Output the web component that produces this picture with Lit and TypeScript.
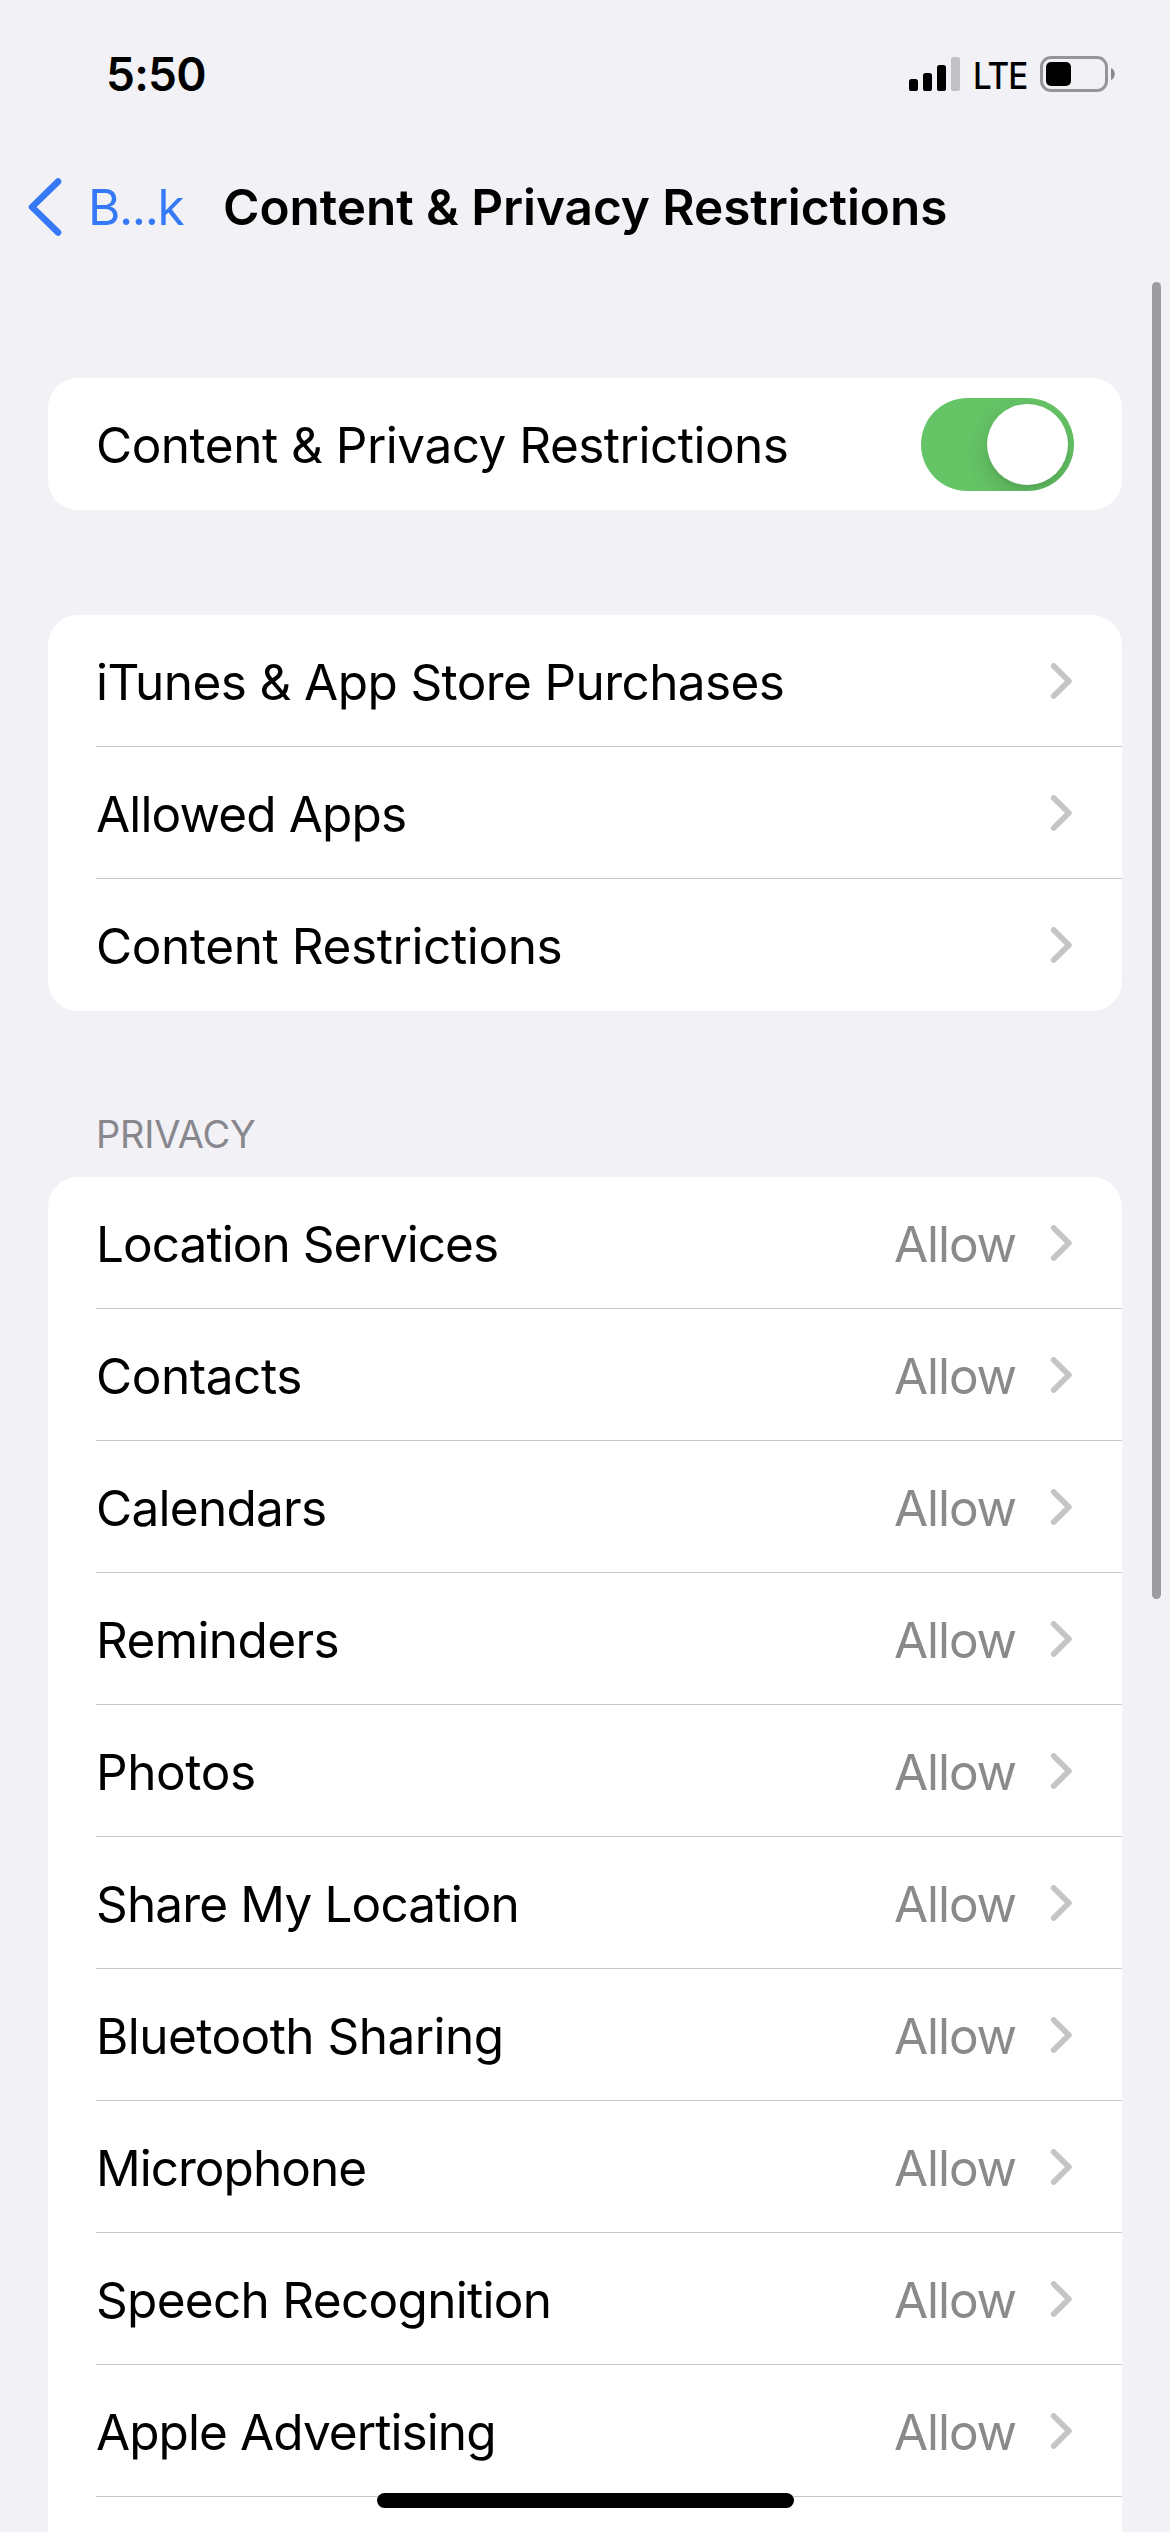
import { LitElement, html, css, svg, nothing } from "lit";
import { customElement, property } from "lit/decorators.js";
import { styleMap } from "lit/directives/style-map.js";

interface Item {
  label: string;
  /** Letter spacing of the label, in pixels. */
  tracking: number;
}

const MAIN_ITEMS: Item[] = [
  { label: "iTunes & App Store Purchases", tracking: -0.6 },
  { label: "Allowed Apps", tracking: -0.85 },
  { label: "Content Restrictions", tracking: -0.4 },
];

const PRIVACY_ITEMS: Item[] = [
  { label: "Location Services", tracking: -0.95 },
  { label: "Contacts", tracking: -0.45 },
  { label: "Calendars", tracking: -0.72 },
  { label: "Reminders", tracking: -0.62 },
  { label: "Photos", tracking: -0.4 },
  { label: "Share My Location", tracking: -0.85 },
  { label: "Bluetooth Sharing", tracking: -0.55 },
  { label: "Microphone", tracking: -0.98 },
  { label: "Speech Recognition", tracking: -0.7 },
  { label: "Apple Advertising", tracking: -0.92 },
];

const SIGNAL_BARS = [
  { x: 0, h: 12, on: true },
  { x: 14, h: 18, on: true },
  { x: 28, h: 26, on: true },
  { x: 42, h: 34, on: false },
];

@customElement("status-bar")
export class StatusBar extends LitElement {
  static styles = css`
    :host {
      display: flex;
      align-items: flex-start;
      justify-content: space-between;
      height: 141px;
      padding: 0 54px 0 106px;
      box-sizing: border-box;
    }
    .time {
      margin-top: 46px;
      font-size: 46px;
      line-height: 56px;
      font-weight: 600;
      letter-spacing: -0.8px;
    }
    .right {
      display: flex;
      align-items: flex-start;
      padding-top: 56px;
    }
    .signal {
      margin-top: 1px;
    }
    .net {
      width: 54px;
      margin: -2px 13px 0 13px;
      font-size: 36.5px;
      line-height: 44px;
      font-weight: 500;
      letter-spacing: -1.2px;
      white-space: nowrap;
      transform: scaleX(0.91);
      transform-origin: 0 0;
    }
  `;
  render() {
    return html`
      <div class="time">5:50</div>
      <div class="right">
        <svg class="signal" width="51" height="34" viewBox="0 0 51 34">
          ${SIGNAL_BARS.map(
            (b) => svg`<rect x=${b.x} y=${34 - b.h} width="9" height=${b.h} rx="2.6" fill=${b.on ? "#000" : "#c1c0c5"}></rect>`
          )}
        </svg>
        <div class="net">LTE</div>
        <svg width="76" height="36" viewBox="0 0 76 36">
          <rect x="1.5" y="1.5" width="65" height="33" rx="9.5" fill="none" stroke="#959598" stroke-width="3"></rect>
          <rect x="6" y="6" width="25" height="24" rx="5" fill="#000"></rect>
          <path d="M71 12 C76 14 76 22 71 24 Z" fill="#88888b"></path>
        </svg>
      </div>
    `;
  }
}

@customElement("nav-bar")
export class NavBar extends LitElement {
  static styles = css`
    :host {
      display: flex;
      align-items: center;
      height: 132px;
      padding-left: 28px;
      box-sizing: border-box;
    }
    .back {
      display: flex;
      align-items: center;
      width: 195px;
      color: #3579f6;
      font-size: 49.5px;
      line-height: 60px;
    }
    .back span {
      margin-left: 26px;
      letter-spacing: -1.4px;
    }
    .title {
      font-size: 49.5px;
      line-height: 60px;
      font-weight: 600;
      letter-spacing: -0.05px;
      white-space: nowrap;
    }
  `;
  render() {
    return html`
      <div class="back">
        <svg width="34" height="58" viewBox="0 0 34 58">
          <path d="M30 3.6 L4 29 L30 54.4" fill="none" stroke="#3579f6" stroke-width="6.6" stroke-linecap="round" stroke-linejoin="round"></path>
        </svg>
        <span>B...k</span>
      </div>
      <div class="title">Content &amp; Privacy Restrictions</div>
    `;
  }
}

@customElement("toggle-switch")
export class ToggleSwitch extends LitElement {
  static styles = css`
    :host {
      display: flex;
      justify-content: flex-end;
      width: 153px;
      height: 93px;
      padding: 6px;
      box-sizing: border-box;
      border-radius: 47px;
      background: #65c466;
      overflow: hidden;
    }
    .knob {
      width: 81px;
      height: 81px;
      border-radius: 50%;
      background: #fff;
      box-shadow: 0 9px 24px rgba(0, 0, 0, 0.16), 0 3px 3px rgba(0, 0, 0, 0.05);
    }
  `;
  render() {
    return html`<div class="knob"></div>`;
  }
}

@customElement("settings-row")
export class SettingsRow extends LitElement {
  @property() label = "";
  @property() value?: string;
  @property({ type: Number }) tracking = -0.6;
  @property({ type: Boolean }) toggle = false;

  static styles = css`
    :host {
      display: block;
      padding-left: 48px;
    }
    .row {
      display: flex;
      align-items: center;
      height: 132px;
      padding: 1px 48px 0 0;
      box-sizing: border-box;
      border-bottom: 1px solid #c6c6c8;
      font-size: 49.5px;
      line-height: 60px;
    }
    :host([last]) .row {
      border-bottom-color: transparent;
    }
    .label {
      flex: 1;
      margin-top: 2px;
      color: #000;
      white-space: nowrap;
    }
    .value {
      margin: 2px 34px 0 0;
      color: #8a8a8d;
      letter-spacing: -1.1px;
    }
  `;
  render() {
    return html`
      <div class="row">
        <span class="label" style=${styleMap({ letterSpacing: `${this.tracking}px` })}>${this.label}</span>
        ${this.value ? html`<span class="value">${this.value}</span>` : nothing}
        ${this.toggle
          ? html`<toggle-switch></toggle-switch>`
          : html`<svg width="24" height="36" viewBox="0 0 24 36">
              <path d="M3.7 3 L18.9 18 L3.7 33" fill="none" stroke="#c5c5c7" stroke-width="5.8" stroke-linecap="round" stroke-linejoin="round"></path>
            </svg>`}
      </div>
    `;
  }
}

@customElement("app-root")
export class AppRoot extends LitElement {
  static styles = css`
    :host {
      display: block;
      position: relative;
      width: 1170px;
      height: 2532px;
      overflow: hidden;
      background: #f2f1f6;
      color: #000;
      font-family: Inter, "Liberation Sans", sans-serif;
    }
    .content {
      display: flex;
      flex-direction: column;
      padding: 105px 48px 0;
    }
    .card {
      flex: none;
      border-radius: 30px;
      background: #fff;
      overflow: hidden;
    }
    .card.gap {
      margin-top: 105px;
    }
    .card.open {
      height: 1400px;
      border-radius: 30px 30px 0 0;
    }
    .heading {
      height: 46px;
      margin: 100px 0 20px 48px;
      font-size: 38px;
      line-height: 46px;
      letter-spacing: -0.2px;
      color: #88878d;
    }
    .scrollbar {
      position: absolute;
      top: 282px;
      right: 9px;
      width: 9px;
      height: 1317px;
      border-radius: 5px;
      background: #9d9d9f;
    }
    .home {
      position: absolute;
      left: 377px;
      bottom: 24px;
      width: 417px;
      height: 15px;
      border-radius: 8px;
      background: #000;
    }
  `;
  render() {
    return html`
      <status-bar></status-bar>
      <nav-bar></nav-bar>
      <main class="content">
        <section class="card">
          <settings-row label="Content & Privacy Restrictions" tracking="-0.5" toggle last></settings-row>
        </section>
        <section class="card gap">
          ${MAIN_ITEMS.map(
            (item, i) => html`<settings-row
              .label=${item.label}
              .tracking=${item.tracking}
              ?last=${i === MAIN_ITEMS.length - 1}
            ></settings-row>`
          )}
        </section>
        <div class="heading">PRIVACY</div>
        <section class="card open">
          ${PRIVACY_ITEMS.map(
            (item) => html`<settings-row .label=${item.label} .tracking=${item.tracking} value="Allow"></settings-row>`
          )}
        </section>
      </main>
      <div class="scrollbar"></div>
      <div class="home"></div>
    `;
  }
}
